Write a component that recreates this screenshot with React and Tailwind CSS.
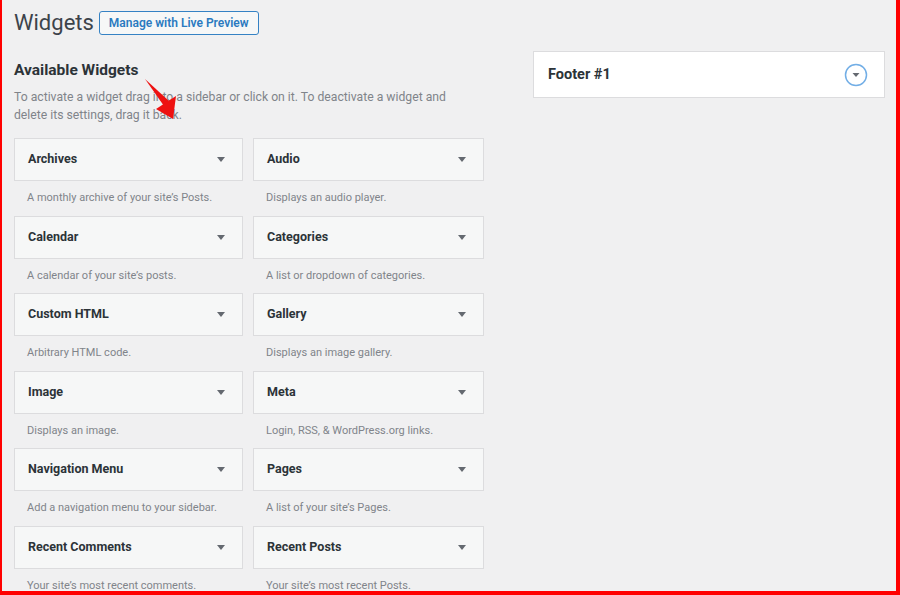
const widgets = [
  ['Archives', "A monthly archive of your site’s Posts."],
  ['Audio', 'Displays an audio player.'],
  ['Calendar', 'A calendar of your site’s posts.'],
  ['Categories', 'A list or dropdown of categories.'],
  ['Custom HTML', 'Arbitrary HTML code.'],
  ['Gallery', 'Displays an image gallery.'],
  ['Image', 'Displays an image.'],
  ['Meta', 'Login, RSS, & WordPress.org links.'],
  ['Navigation Menu', 'Add a navigation menu to your sidebar.'],
  ['Pages', 'A list of your site’s Pages.'],
  ['Recent Comments', 'Your site’s most recent comments.'],
  ['Recent Posts', 'Your site’s most recent Posts.'],
]

function Caret() {
  return (
    <svg width="8" height="5" viewBox="0 0 8 5" className="shrink-0">
      <path d="M0 0 H8 L4 5 Z" fill="#646970" />
    </svg>
  )
}

function WidgetItem({ title, desc }) {
  return (
    <div className="h-[77.5px]">
      <div className="h-[43px] border border-[#dcdcde] bg-[#f6f7f7] flex items-center justify-between pl-[13px] pr-[17px]">
        <span className="text-[12.5px] font-bold text-[#2c3338]">{title}</span>
        <Caret />
      </div>
      <div className="h-[34.5px] flex items-center pl-[13px] text-[11px] text-[#80848a]">{desc}</div>
    </div>
  )
}

export default function App() {
  return (
    <div
      className="relative w-[900px] h-[595px] overflow-hidden bg-[#f0f0f1] border-l-2 border-r-4 border-b-4 border-[#ff0000] flex"
      style={{ fontFamily: 'Roboto, "Liberation Sans", sans-serif' }}
    >
      {/* Left: available widgets */}
      <div className="ml-[12px] w-[470px] shrink-0">
        <div className="mt-[11px] h-[24px] flex items-center gap-[5px]">
          <h1 className="text-[22px] leading-none text-[#3c434a] font-normal">Widgets</h1>
          <button className="h-[24px] px-[9px] rounded-[3px] border border-[#3582c4] bg-[#f6f7f7] text-[12px] font-semibold text-[#2a7ac0]">
            Manage with Live Preview
          </button>
        </div>

        <h2 className="mt-[27px] text-[15.5px] leading-[16px] font-bold text-[#2c3338]">Available Widgets</h2>
        <p className="mt-[10px] text-[12.2px] leading-[18px] text-[#80848a] w-[445px]">
          To activate a widget drag into a sidebar or click on it. To deactivate a widget and delete its settings, drag it back.
        </p>

        <div className="mt-[14px] grid grid-cols-[229px_231px] gap-x-[10px]">
          {widgets.map(([t, d]) => (
            <WidgetItem key={t} title={t} desc={d} />
          ))}
        </div>
      </div>

      {/* Right: sidebar areas */}
      <div className="ml-[49px] pt-[51px] w-[352px] shrink-0">
        <div className="h-[47px] border border-[#dcdcde] bg-white flex items-center justify-between pl-[14px] pr-[16px]">
          <span className="text-[14.5px] font-bold text-[#2c3338]">Footer #1</span>
          <svg width="24" height="24" viewBox="0 0 24 24">
            <circle cx="12" cy="12" r="10.5" fill="none" stroke="#72aee6" strokeWidth="1.5" />
            <path d="M8.5 10 H15.5 L12 14 Z" fill="#646970" />
          </svg>
        </div>
      </div>

      {/* annotation arrow */}
      <svg className="absolute left-[138px] top-[72px]" width="50" height="50" viewBox="0 0 50 50">
        <path d="M5 7 L29 29 L24 34 Z" fill="#ee1111" />
        <path d="M16 37 L36 24 L33 47 Z" fill="#ee1111" />
      </svg>
    </div>
  )
}
